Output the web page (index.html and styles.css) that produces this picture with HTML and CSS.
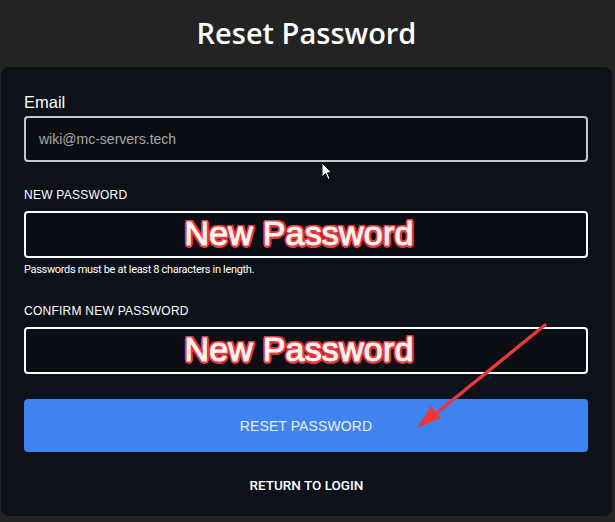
FILE: index.html
```html
<!DOCTYPE html>
<html>
<head>
<meta charset="utf-8">
<link rel="stylesheet" href="styles.css">
</head>
<body>
<header class="top">
  <h1 class="title">Reset Password</h1>
</header>
<main class="card">
  <label class="email-label">Email</label>
  <div class="field email-field">wiki@mc-servers.tech</div>

  <label class="caps-label first">NEW PASSWORD</label>
  <div class="field pw-field"><span class="annot">New Password</span></div>
  <p class="hint">Passwords must be at least 8 characters in length.</p>

  <label class="caps-label second">CONFIRM NEW PASSWORD</label>
  <div class="field pw-field"><span class="annot">New Password</span></div>

  <button class="submit">RESET PASSWORD</button>
  <a class="return">RETURN TO LOGIN</a>
</main>

<svg class="arrow" width="615" height="522" viewBox="0 0 615 522">
  <line x1="545" y1="325" x2="428" y2="420" stroke="#e8383a" stroke-width="3.5" stroke-linecap="round"/>
  <polygon points="417,428 431,406 441,418" fill="#e8383a"/>
</svg>

<svg class="cursor" width="14" height="20" viewBox="0 0 14 20">
  <path d="M1 1 L1 15 L4.5 11.5 L7 17.5 L9 16.5 L6.5 10.8 L11 10.8 Z" fill="#fff" stroke="#000" stroke-width="1"/>
</svg>
</body>
</html>
```

FILE: styles.css
```css
* { box-sizing: border-box; }
html, body { margin: 0; padding: 0; }
body {
  background: #232323;
  width: 615px;
  height: 522px;
  overflow: hidden;
  position: relative;
  font-family: "Liberation Sans", Arial, sans-serif;
  color: #fff;
}
.top {
  height: 67px;
  display: flex;
  justify-content: center;
  align-items: flex-start;
}
.title {
  margin: 13px 0 0 0;
  font-family: "Open Sans", sans-serif;
  font-weight: 600;
  font-size: 29px;
  line-height: 40px;
  color: #fff;
  padding-right: 2px;
}
.card {
  margin: 0 0 0 1px;
  width: 611px;
  height: 449px;
  background: #0d1119;
  border-radius: 8px;
  padding: 25px 24px 23px 23px;
  display: flex;
  flex-direction: column;
}
.email-label {
  font-size: 16.5px;
  line-height: 20px;
  color: #fff;
}
.field {
  margin-top: 4px;
  width: 564px;
  border-radius: 4px;
  background: #0b0e14;
  display: flex;
  align-items: center;
}
.email-field {
  height: 46px;
  border: 2px solid #c8c8c8;
  padding-left: 13px;
  font-size: 14px;
  color: #a8a8a8;
}
.caps-label {
  font-size: 12px;
  line-height: 16px;
  letter-spacing: 0.25px;
  color: #fff;
}
.caps-label.first { margin-top: 25px; }
.caps-label.second { margin-top: 26px; }
.pw-field {
  margin-top: 8px;
  height: 47px;
  border: 2px solid #fff;
  justify-content: center;
  padding-right: 14px;
  padding-bottom: 3px;
}
.annot {
  font-family: "Liberation Sans", Arial, sans-serif;
  font-weight: 400;
  font-size: 34px;
  line-height: 38px;
  letter-spacing: 0.2px;
  color: #fff4f4;
  -webkit-text-stroke: 1px #fff4f4;
  text-shadow:
    2.5px 0 0 #e8383a, -2.5px 0 0 #e8383a, 0 2.5px 0 #e8383a, 0 -2.5px 0 #e8383a,
    1.8px 1.8px 0 #e8383a, -1.8px 1.8px 0 #e8383a, 1.8px -1.8px 0 #e8383a, -1.8px -1.8px 0 #e8383a;
}
.hint {
  margin: 5px 0 0 0;
  font-family: Roboto, sans-serif;
  font-size: 11px;
  line-height: 14px;
  letter-spacing: -0.33px;
  color: #fff;
}
.submit {
  margin-top: 25px;
  width: 564px;
  height: 53px;
  border: none;
  border-radius: 4px;
  background: #3f83f1;
  color: #e6eefc;
  font-family: "Liberation Sans", Arial, sans-serif;
  font-size: 14px;
  letter-spacing: 0.1px;
  padding: 0;
}
.return {
  margin-top: 25px;
  align-self: center;
  margin-left: 1px;
  font-family: Roboto, sans-serif;
  font-weight: 500;
  font-size: 13.5px;
  line-height: 16px;
  color: #fff;
}
.arrow {
  position: absolute;
  left: 0;
  top: 0;
  pointer-events: none;
}
.cursor {
  position: absolute;
  left: 321px;
  top: 162px;
}
```
